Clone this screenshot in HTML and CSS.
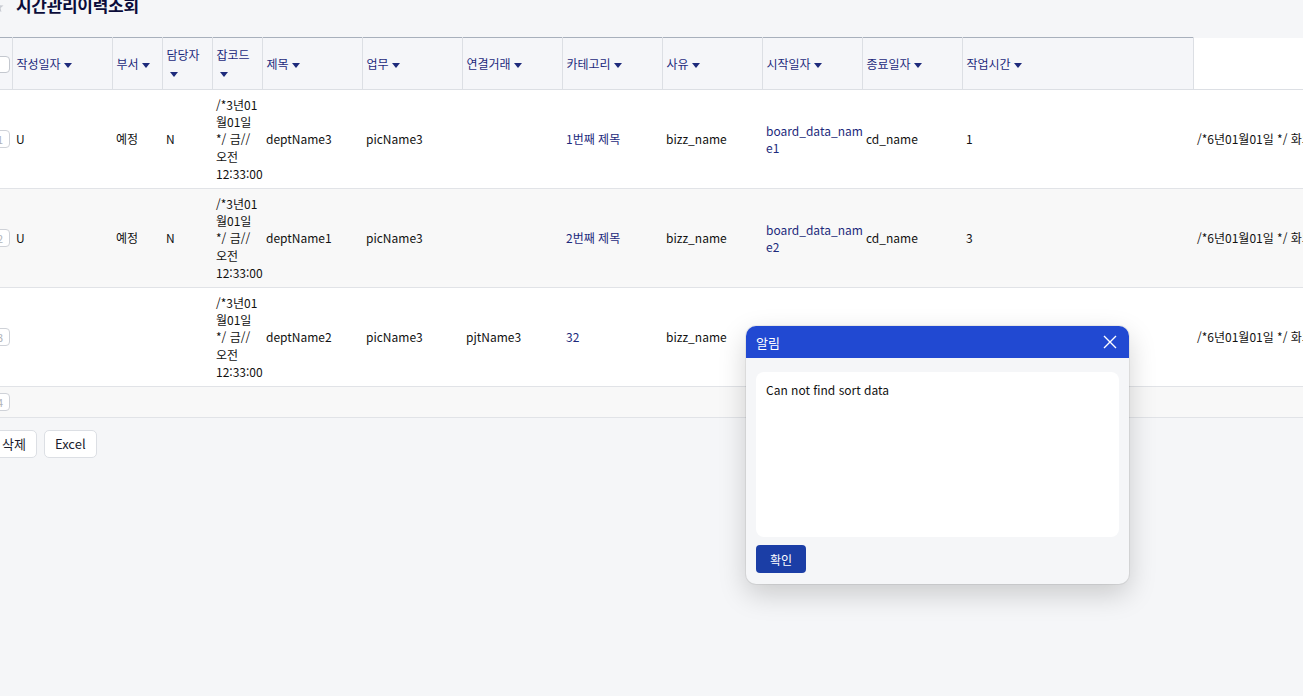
FILE: index.html
```
<!DOCTYPE html>
<html lang="ko">
<head>
<meta charset="utf-8">
<title>시간관리이력조회</title>
<link rel="stylesheet" href="styles.css">
</head>
<body>
<div class="page">
  <div class="title-row">
    <svg class="star" viewBox="0 0 12 12" width="12" height="12"><path d="M6 0.5l1.6 3.6 3.9.4-2.9 2.6.8 3.9L6 9l-3.4 2 .8-3.9L.5 4.5l3.9-.4z" fill="#c9ccd3"/></svg>
    <h1 class="title">시간관리이력조회</h1>
  </div>

  <table class="grid">
    <colgroup>
      <col class="c-num"><col class="c100"><col class="c50"><col class="c50"><col class="c50">
      <col class="c100"><col class="c100"><col class="c100"><col class="c100"><col class="c100">
      <col class="c100"><col class="c100"><col class="c231"><col class="c-last">
    </colgroup>
    <thead>
      <tr>
        <th class="num"><span class="chk"></span></th>
        <th><span class="sort">작성일자</span></th>
        <th><span class="sort">부서</span></th>
        <th><span class="sort">담당자</span></th>
        <th><span class="sort">잡코드</span></th>
        <th><span class="sort">제목</span></th>
        <th><span class="sort">업무</span></th>
        <th><span class="sort">연결거래</span></th>
        <th><span class="sort">카테고리</span></th>
        <th><span class="sort">사유</span></th>
        <th><span class="sort">시작일자</span></th>
        <th><span class="sort">종료일자</span></th>
        <th><span class="sort">작업시간</span></th>
        <th class="blank"></th>
      </tr>
    </thead>
    <tbody>
      <tr>
        <td class="num"><span class="rn">1</span></td>
        <td>U</td>
        <td>예정</td>
        <td>N</td>
        <td class="date">/*3년01<br>월01일<br>*/ 금//<br>오전<br>12:33:00</td>
        <td>deptName3</td>
        <td>picName3</td>
        <td></td>
        <td class="link">1번째 제목</td>
        <td>bizz_name</td>
        <td class="link">board_data_nam<br>e1</td>
        <td>cd_name</td>
        <td>1</td>
        <td class="nowrap">/*6년01월01일 */ 화요일 오전 12:33:00</td>
      </tr>
      <tr class="alt">
        <td class="num"><span class="rn">2</span></td>
        <td>U</td>
        <td>예정</td>
        <td>N</td>
        <td class="date">/*3년01<br>월01일<br>*/ 금//<br>오전<br>12:33:00</td>
        <td>deptName1</td>
        <td>picName3</td>
        <td></td>
        <td class="link">2번째 제목</td>
        <td>bizz_name</td>
        <td class="link">board_data_nam<br>e2</td>
        <td>cd_name</td>
        <td>3</td>
        <td class="nowrap">/*6년01월01일 */ 화요일 오전 12:33:00</td>
      </tr>
      <tr>
        <td class="num"><span class="rn">3</span></td>
        <td></td>
        <td></td>
        <td></td>
        <td class="date">/*3년01<br>월01일<br>*/ 금//<br>오전<br>12:33:00</td>
        <td>deptName2</td>
        <td>picName3</td>
        <td>pjtName3</td>
        <td class="link">32</td>
        <td>bizz_name</td>
        <td></td>
        <td></td>
        <td></td>
        <td class="nowrap">/*6년01월01일 */ 화요일 오전 12:33:00</td>
      </tr>
      <tr class="alt short">
        <td class="num"><span class="rn">4</span></td>
        <td></td><td></td><td></td><td></td><td></td><td></td><td></td>
        <td></td><td></td><td></td><td></td><td></td><td></td>
      </tr>
    </tbody>
  </table>

  <div class="actions">
    <button class="btn">삭제</button>
    <button class="btn">Excel</button>
  </div>
</div>

<div class="modal">
  <div class="modal-head">
    <span class="modal-title">알림</span>
    <svg class="close" viewBox="0 0 14 14" width="14" height="14"><path d="M1 1L13 13M13 1L1 13" stroke="#fff" stroke-width="1.4" fill="none"/></svg>
  </div>
  <div class="modal-body">
    <div class="msg">Can not find sort data</div>
    <button class="ok">확인</button>
  </div>
</div>
</body>
</html>
```

FILE: styles.css
```
html, body {
  margin: 0;
  padding: 0;
  overflow: hidden;
  height: 100%;
}
body {
  background: #f5f6f8;
  font-family: "Noto Sans CJK KR", "Noto Sans", sans-serif;
  font-size: 12px;
  color: #111;
  position: relative;
}
.page {
  margin-left: -22px;
}
.title-row {
  display: flex;
  align-items: center;
  height: 24px;
  margin-top: -7px;
  margin-bottom: 20px;
  padding-left: 14px;
}
.star {
  margin-right: 12px;
  margin-top: 4px;
}
.title {
  margin: 0;
  font-size: 17px;
  font-weight: 700;
  color: #0b0c3a;
  letter-spacing: -0.3px;
  line-height: 24px;
}
.grid {
  border-collapse: collapse;
  table-layout: fixed;
  width: 1415px;
}
.c-num { width: 34px; }
.c100 { width: 100px; }
.c50 { width: 50px; }
.c231 { width: 231px; }
.c-last { width: 200px; }
.grid th {
  background: #f5f6f9;
  border-top: 1px solid #a8b0bc;
  border-right: 1px solid #dcdfe4;
  border-bottom: 1px solid #dcdfe4;
  height: 52px;
  padding: 0 4px;
  text-align: left;
  vertical-align: middle;
  font-weight: 400;
  color: #1d2a7c;
  line-height: 18px;
  box-sizing: border-box;
}
.grid th.blank {
  background: #fff;
  border-top: none;
  border-right: none;
}
.grid th.num {
  padding: 0 2px 0 0;
  text-align: right;
}
.sort::after {
  content: "";
  display: inline-block;
  margin-left: 3px;
  vertical-align: middle;
  border-left: 4px solid transparent;
  border-right: 4px solid transparent;
  border-top: 5px solid #1d2a7c;
}
.chk {
  display: inline-block;
  width: 14px;
  height: 15px;
  border: 1px solid #c4c8cf;
  border-radius: 4px;
  background: #fff;
  vertical-align: middle;
}
.grid td {
  padding: 6px 4px;
  line-height: 17.2px;
  vertical-align: middle;
  border-bottom: 1px solid #e1e3e7;
  background: #fff;
  white-space: normal;
}
.grid tr.alt td {
  background: #f8f8f8;
}
.grid tr.short td {
  height: 18px;
  line-height: 18px;
  padding-top: 6px;
  padding-bottom: 6px;
  box-sizing: content-box;
}
.grid td.num {
  padding-left: 0;
  padding-right: 2px;
  text-align: right;
}
.rn {
  display: inline-block;
  width: 20px;
  height: 18px;
  box-sizing: border-box;
  border: 1px solid #cfd2d8;
  border-radius: 4px;
  background: #fff;
  color: #b0b3b9;
  font-size: 11px;
  line-height: 16px;
  text-align: center;
  vertical-align: top;
}
.link {
  color: #1d2a7c;
}
.grid td.nowrap {
  white-space: nowrap;
  overflow: hidden;
}
.actions {
  display: flex;
  gap: 7px;
  margin-top: 12px;
  padding-left: 13px;
}
.btn {
  font-family: "Noto Sans CJK KR", "Noto Sans", sans-serif;
  font-size: 13px;
  color: #1a1d2e;
  background: #fff;
  border: 1px solid #dcdfe4;
  border-radius: 5px;
  height: 28px;
  padding: 0 10px;
  line-height: 26px;
}
.modal {
  position: absolute;
  left: 746px;
  top: 326px;
  width: 383px;
  height: 258px;
  background: #f5f6f8;
  border-radius: 10px;
  box-shadow: 0 10px 28px rgba(0, 0, 0, 0.18), 0 0 0 1px rgba(0, 0, 0, 0.06);
  overflow: hidden;
}
.modal-head {
  height: 32px;
  background: #2149d2;
  display: flex;
  align-items: center;
  justify-content: space-between;
  padding: 0 12px 0 10px;
}
.modal-title {
  color: #fff;
  font-size: 13px;
}
.modal-body {
  padding: 14px 10px 11px 10px;
  display: flex;
  flex-direction: column;
  align-items: flex-start;
}
.msg {
  width: 363px;
  height: 165px;
  box-sizing: border-box;
  background: #fff;
  border-radius: 8px;
  padding: 9px 10px;
  font-size: 12px;
  color: #111;
  line-height: 18px;
}
.ok {
  margin-top: 8px;
  width: 50px;
  height: 28px;
  background: #1b3ea6;
  color: #fff;
  border: none;
  border-radius: 4px;
  font-family: "Noto Sans CJK KR", "Noto Sans", sans-serif;
  font-size: 12px;
}
```
